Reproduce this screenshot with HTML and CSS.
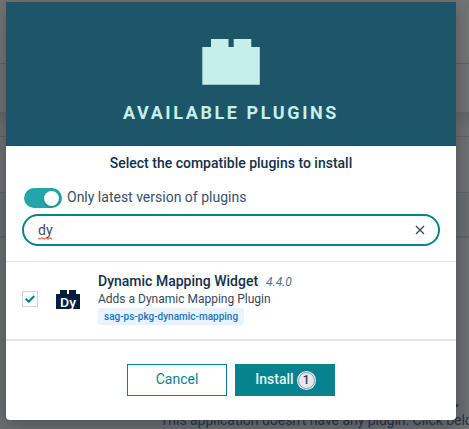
FILE: index.html
```html
<!DOCTYPE html>
<html lang="en">
<head>
<meta charset="utf-8">
<title>Available plugins</title>
<link rel="stylesheet" href="styles.css">
</head>
<body>
<div class="backdrop" aria-hidden="true">
  <div class="band band-top"></div>
  <div class="band band-nav"></div>
  <div class="band band-tabs"></div>
  <div class="band band-row"></div>
  <div class="band band-tools"></div>
  <div class="empty"><b class="empty-dot">.</b><p class="empty-text">This application doesn't have any plugin. Click below</p></div>
</div>
<main class="modal">
  <header class="modal-header">
    <svg class="brick" width="58" height="46" viewBox="0 0 58 46"><path d="M.3 8H9V0h17.5v8h5.2V0h17.6v8h8.5v37.8H.3z"/></svg>
    <h1 class="modal-title">AVAILABLE PLUGINS</h1>
  </header>
  <section class="filters">
    <p class="lead">Select the compatible plugins to install</p>
    <label class="toggle"><span class="switch"><span class="knob"></span></span><span class="toggle-label">Only latest version of plugins</span></label>
    <div class="search">
      <span class="query">dy<svg class="squiggle" width="15" height="3" viewBox="0 0 15 3"><path d="M0 .7L2 2.3 4 .7 6 2.3 8 .7l2 1.6L12 .7l2 1.6"/></svg></span>
      <svg class="clear" width="10" height="10" viewBox="0 0 10 10"><path d="M1 1l8 8M9 1L1 9"/></svg>
    </div>
  </section>
  <section class="plugin">
    <span class="checkbox"><svg width="10" height="8" viewBox="0 0 10 8"><path d="M.7 3.8l3 3L9.3 1"/></svg></span>
    <svg class="plugin-icon" width="24" height="19" viewBox="0 0 24 19"><path d="M0 4h4V0h7v4h2V0h7v4h4v15H0z"/><text x="4" y="16.6" textLength="16" lengthAdjust="spacingAndGlyphs">Dy</text></svg>
    <div class="plugin-info">
      <div class="plugin-heading"><span class="plugin-name">Dynamic Mapping Widget</span><em class="version">4.4.0</em></div>
      <p class="description">Adds a Dynamic Mapping Plugin</p>
      <span class="tag">sag-ps-pkg-dynamic-mapping</span>
    </div>
  </section>
  <footer class="actions">
    <button class="btn">Cancel</button>
    <button class="btn btn-primary">Install<span class="count">1</span></button>
  </footer>
</main>
</body>
</html>
```
FILE: styles.css
```css
* { box-sizing: border-box; }
body { display: flex; align-items: flex-start; margin: 0; width: 469px; height: 429px; overflow: hidden; position: relative; background: #6c6e70; font-family: Roboto, sans-serif; color: #14304d; }
h1, p { margin: 0; }
.backdrop { position: absolute; inset: 0; display: flex; flex-direction: column; }
.band { border-bottom: 1px solid #5f6367; flex: none; }
.band-top { height: 64px; background: #737474; }
.band-nav { height: 48px; border: 0; background: #707172; }
.band-tabs { height: 25px; background: linear-gradient(#626568, #6e7072 16px); }
.band-row { height: 56px; background: #6e7072; }
.band-tools { height: 45px; border-bottom-width: 2px; background: #696d6f; }
.empty { position: absolute; left: 160px; top: 391px; width: 320px; color: #22384a; white-space: nowrap; }
.empty-dot { display: block; margin-left: 294px; font-size: 20px; line-height: 19px; }
.empty-text { font-size: 14px; line-height: 20px; letter-spacing: -.03px; }
.modal { position: relative; width: 450px; height: 418px; margin: 2px 0 0 6px; background: #fff; border-radius: 0 0 4px 4px; overflow: hidden; box-shadow: 0 4px 18px rgba(0,12,25,.3); }
.modal-header { height: 144px; padding-top: 37px; background: #1e5669; border-bottom: 1px solid #194e63; display: flex; flex-direction: column; align-items: center; }
.brick { display: block; fill: #c5efeb; }
.modal-title { margin-top: 17px; font-size: 18px; line-height: 22px; font-weight: 700; letter-spacing: 2.6px; color: #c5efeb; }
.filters { height: 116px; padding: 7px 16px 0; border-bottom: 1px solid #e0e3ea; }
.lead { font-size: 14px; line-height: 20px; font-weight: 500; text-align: center; color: #14304d; }
.toggle { display: flex; align-items: center; height: 20px; margin: 15px 0 6px 2px; }
.switch { display: flex; align-items: center; justify-content: flex-end; width: 38px; height: 20px; padding-right: 3px; border-radius: 10px; background: #22a6aa; }
.knob { width: 15px; height: 15px; border-radius: 50%; background: #fff; box-shadow: 0 1px 3px rgba(0,50,60,.3); }
.toggle-label { position: relative; top: -1px; margin-left: 5px; font-size: 14px; color: #3a4f68; }
.search { display: flex; align-items: center; justify-content: space-between; height: 32px; padding: 0 13px 0 14px; border: 2px solid #07838f; border-radius: 16px; }
.query { position: relative; font-size: 14px; line-height: 20px; color: #3a4f68; }
.squiggle { position: absolute; left: 0; bottom: 0; fill: none; stroke: #ff2020; stroke-width: 1; }
.clear { fill: none; stroke: #324861; stroke-width: 1.3; }
.plugin { display: flex; height: 79px; padding: 9px 16px 0; border-bottom: 2px solid #e1e4e9; }
.checkbox { display: flex; align-items: center; justify-content: center; width: 16px; height: 16px; margin-top: 20px; border: 1px solid #ccd4de; }
.checkbox svg { fill: none; stroke: #07838f; stroke-width: 2; }
.plugin-icon { margin: 19px 18px 0; fill: #051d3d; }
.plugin-icon text { font-size: 13.5px; font-weight: 500; fill: #fff; }
.plugin-heading { display: flex; align-items: baseline; height: 20px; line-height: 20px; }
.plugin-name { font-size: 14px; font-weight: 500; }
.version { margin-left: 8px; font-size: 12px; color: #54708f; }
.description { font-size: 12px; line-height: 16px; color: #324861; }
.tag { display: block; width: 146px; height: 17px; margin-top: 1px; padding-left: 6px; border-radius: 3px; background: #e8f3ff; color: #1776bf; font-size: 10px; line-height: 18px; font-weight: 500; white-space: nowrap; }
.actions { display: flex; justify-content: center; gap: 8px; padding-top: 23px; }
.btn { display: flex; align-items: center; justify-content: center; width: 100px; height: 32px; padding: 0 0 2px; border: 1px solid #07838f; background: #fff; color: #07838f; font: 400 14px/20px Roboto, sans-serif; }
.btn-primary { padding-right: 0; background: #07838f; color: #e6f6f6; font-weight: 500; }
.count { display: flex; align-items: center; justify-content: center; width: 17px; height: 17px; margin: 2px 0 0 4px; border: 1px solid #899aac; border-radius: 50%; background: #e5e9ef; box-shadow: 0 0 0 1px #e5f0f3; color: #263e59; font-size: 12px; }
```
